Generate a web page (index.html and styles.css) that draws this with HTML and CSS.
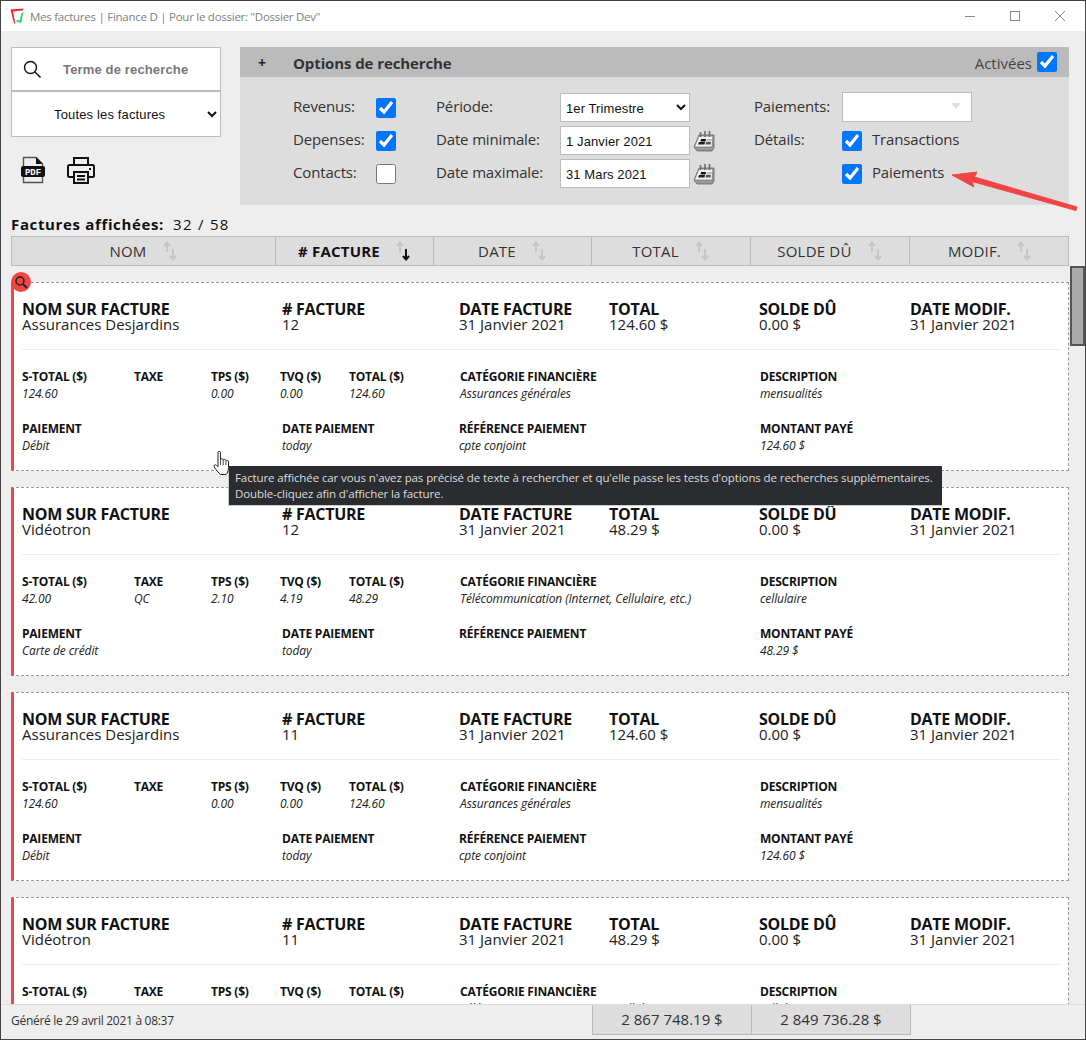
FILE: index.html
```html
<!DOCTYPE html>
<html lang="fr">
<head>
<meta charset="utf-8">
<title>Mes factures</title>
<link rel="stylesheet" href="styles.css">
</head>
<body>
<svg class="defs" width="0" height="0">
  <symbol id="sort" viewBox="0 0 16 20"><path d="M5 11V2M2 5L5 1.500L8 5" fill="none" stroke="#c6c6c6" stroke-width="2"/><path d="M11 8V18M8 15L11 18.500L14 15" fill="none" stroke="#c6c6c6" stroke-width="2"/></symbol>
  <symbol id="sort-down" viewBox="0 0 16 20"><path d="M5 11V2M2 5L5 1.500L8 5" fill="none" stroke="#c6c6c6" stroke-width="2"/><path d="M11 8V18M8 15L11 18.500L14 15" fill="none" stroke="#111" stroke-width="2"/></symbol>
  <symbol id="cal" viewBox="0 0 22 22"><path d="M6 5H21V18L19 21H4L1 17Z" fill="#999" stroke="#666" stroke-width=".8"/><path d="M6 6H20L19 17H1.500Z" fill="#f2f2f2" stroke="#777" stroke-width=".7"/><path d="M8 9H13L12.500 11.500H7.500Z" fill="#111"/><path d="M6 12H12L11.500 14.500H5Z" fill="#222"/><path d="M13 12H18L17.500 14.500H12.500Z" fill="#555"/><path d="M14 9H19L18.500 11.500H13.500Z" fill="#bbb"/><path d="M7.500 2V7M12 1V7M16.500 1V7" stroke="#777" stroke-width="1.800"/></symbol>
</svg>
<div class="window">
  <header class="titlebar">
    <svg class="logo" width="15" height="16" viewBox="0 0 15 16"><path d="M.5 1.500L13.500 .5L12.300 2.600L3 3.400L5.200 14.500L4 15.500Z" fill="#f5222d"/><path d="M13.500 3.500L11.200 15L6 13.500L7 11.800L9.700 12.500L11.300 5.500Z" fill="#23d57c"/></svg>
    <span class="title-text">Mes factures | Finance D | Pour le dossier: "Dossier Dev"</span>
    <div class="win-controls">
      <svg width="12" height="12" viewBox="0 0 12 12"><path d="M1 6.500H11" stroke="#888" fill="none"/></svg>
      <svg width="12" height="12" viewBox="0 0 12 12"><rect x="1.500" y="1.500" width="9" height="9" stroke="#888" fill="none"/></svg>
      <svg width="12" height="12" viewBox="0 0 12 12"><path d="M1 1L11 11M11 1L1 11" stroke="#888" fill="none"/></svg>
    </div>
  </header>

  <section class="top">
    <div class="left-col">
      <div class="search-box">
        <svg width="20" height="20" viewBox="0 0 20 20"><circle cx="8.500" cy="8.500" r="6" stroke="#111" stroke-width="1.400" fill="none"/><path d="M13 13L18.500 18.500" stroke="#111" stroke-width="1.600"/></svg>
        <span class="search-text">Terme de recherche</span>
      </div>
      <select class="filter-select"><option>Toutes les factures</option></select>
      <div class="tools">
        <svg width="26" height="28" viewBox="0 0 26 28"><path d="M3.500 11V1.500H16L22.500 8V11M3.500 21V26.500H22.500V21" fill="none" stroke="#555" stroke-width="1.400"/><path d="M16 1L23 8H16Z" fill="#111"/><rect x="1" y="10" width="24" height="11" rx="2" fill="#111"/><text x="13" y="19" class="pdf-label" text-anchor="middle">PDF</text></svg>
        <svg width="28" height="28" viewBox="0 0 28 28"><path d="M7 9V2H21V9" fill="none" stroke="#111" stroke-width="2"/><path d="M7 21H2.500A1.500 1.500 0 0 1 1 19.500V10.500A1.500 1.500 0 0 1 2.500 9H25.500A1.500 1.500 0 0 1 27 10.500V19.500A1.500 1.500 0 0 1 25.500 21H21" fill="none" stroke="#111" stroke-width="2"/><rect x="7" y="16" width="14" height="11" fill="#eee" stroke="#111" stroke-width="2"/><path d="M10 20H18M10 23.500H18" stroke="#111" stroke-width="2"/><rect x="22" y="12" width="2" height="2" fill="#111"/></svg>
      </div>
    </div>

    <div class="options">
      <div class="options-head">
        <span class="plus">+</span>
        <span class="options-title">Options de recherche</span>
        <label class="enabled"><span>Activées</span> <input type="checkbox" class="check" checked></label>
      </div>
      <div class="options-grid">
        <span>Revenus:</span><input type="checkbox" class="check" checked>
        <span>Période:</span><select class="field"><option>1er Trimestre</option></select><i></i>
        <span>Paiements:</span><div class="multi"><i class="multi-arrow"></i></div>

        <span>Depenses:</span><input type="checkbox" class="check" checked>
        <span>Date minimale:</span><div class="field date">1 Janvier 2021</div><svg class="cal"><use href="#cal"/></svg>
        <span>Détails:</span><label class="opt"><input type="checkbox" class="check" checked><span>Transactions</span></label>

        <span>Contacts:</span><input type="checkbox" class="check">
        <span>Date maximale:</span><div class="field date">31 Mars 2021</div><svg class="cal"><use href="#cal"/></svg>
        <i></i><label class="opt"><input type="checkbox" class="check" checked><span>Paiements</span></label>
      </div>
    </div>
  </section>

  <div class="count"><b>Factures affichées:</b><span>32 / 58</span></div>

  <div class="thead">
    <div class="th">NOM <svg class="sort"><use href="#sort"/></svg></div>
    <div class="th active"># FACTURE <svg class="sort"><use href="#sort-down"/></svg></div>
    <div class="th">DATE <svg class="sort"><use href="#sort"/></svg></div>
    <div class="th">TOTAL <svg class="sort"><use href="#sort"/></svg></div>
    <div class="th">SOLDE DÛ <svg class="sort"><use href="#sort"/></svg></div>
    <div class="th">MODIF. <svg class="sort"><use href="#sort"/></svg></div>
  </div>

  <main class="list">
    <article class="card">
      <span class="badge"><svg width="14" height="14" viewBox="0 0 14 14"><circle cx="6" cy="6" r="4" fill="none" stroke="#222" stroke-width="1.500"/><path d="M9 9L13 13" stroke="#222" stroke-width="1.800"/></svg></span>
      <div class="row r1">
        <div><h3>NOM SUR FACTURE</h3><p>Assurances Desjardins</p></div>
        <div><h3># FACTURE</h3><p>12</p></div>
        <div><h3>DATE FACTURE</h3><p>31 Janvier 2021</p></div>
        <div><h3>TOTAL</h3><p>124.60 $</p></div>
        <div><h3>SOLDE DÛ</h3><p>0.00 $</p></div>
        <div><h3>DATE MODIF.</h3><p>31 Janvier 2021</p></div>
      </div>
      <hr>
      <div class="row r2">
        <div><h4>S-TOTAL ($)</h4><em>124.60</em></div>
        <div><h4>TAXE</h4></div>
        <div><h4>TPS ($)</h4><em>0.00</em></div>
        <div><h4>TVQ ($)</h4><em>0.00</em></div>
        <div><h4>TOTAL ($)</h4><em>124.60</em></div>
        <div><h4>CATÉGORIE FINANCIÈRE</h4><em>Assurances générales</em></div>
        <div><h4>DESCRIPTION</h4><em>mensualités</em></div>
      </div>
      <div class="row r3">
        <div><h4>PAIEMENT</h4><em>Débit</em></div>
        <div><h4>DATE PAIEMENT</h4><em>today</em></div>
        <div><h4>RÉFÉRENCE PAIEMENT</h4><em>cpte conjoint</em></div>
        <div><h4>MONTANT PAYÉ</h4><em>124.60 $</em></div>
      </div>
    </article>

    <article class="card">
      <div class="row r1">
        <div><h3>NOM SUR FACTURE</h3><p>Vidéotron</p></div>
        <div><h3># FACTURE</h3><p>12</p></div>
        <div><h3>DATE FACTURE</h3><p>31 Janvier 2021</p></div>
        <div><h3>TOTAL</h3><p>48.29 $</p></div>
        <div><h3>SOLDE DÛ</h3><p>0.00 $</p></div>
        <div><h3>DATE MODIF.</h3><p>31 Janvier 2021</p></div>
      </div>
      <hr>
      <div class="row r2">
        <div><h4>S-TOTAL ($)</h4><em>42.00</em></div>
        <div><h4>TAXE</h4><em>QC</em></div>
        <div><h4>TPS ($)</h4><em>2.10</em></div>
        <div><h4>TVQ ($)</h4><em>4.19</em></div>
        <div><h4>TOTAL ($)</h4><em>48.29</em></div>
        <div><h4>CATÉGORIE FINANCIÈRE</h4><em>Télécommunication (Internet, Cellulaire, etc.)</em></div>
        <div><h4>DESCRIPTION</h4><em>cellulaire</em></div>
      </div>
      <div class="row r3">
        <div><h4>PAIEMENT</h4><em>Carte de crédit</em></div>
        <div><h4>DATE PAIEMENT</h4><em>today</em></div>
        <div><h4>RÉFÉRENCE PAIEMENT</h4></div>
        <div><h4>MONTANT PAYÉ</h4><em>48.29 $</em></div>
      </div>
    </article>

    <article class="card">
      <div class="row r1">
        <div><h3>NOM SUR FACTURE</h3><p>Assurances Desjardins</p></div>
        <div><h3># FACTURE</h3><p>11</p></div>
        <div><h3>DATE FACTURE</h3><p>31 Janvier 2021</p></div>
        <div><h3>TOTAL</h3><p>124.60 $</p></div>
        <div><h3>SOLDE DÛ</h3><p>0.00 $</p></div>
        <div><h3>DATE MODIF.</h3><p>31 Janvier 2021</p></div>
      </div>
      <hr>
      <div class="row r2">
        <div><h4>S-TOTAL ($)</h4><em>124.60</em></div>
        <div><h4>TAXE</h4></div>
        <div><h4>TPS ($)</h4><em>0.00</em></div>
        <div><h4>TVQ ($)</h4><em>0.00</em></div>
        <div><h4>TOTAL ($)</h4><em>124.60</em></div>
        <div><h4>CATÉGORIE FINANCIÈRE</h4><em>Assurances générales</em></div>
        <div><h4>DESCRIPTION</h4><em>mensualités</em></div>
      </div>
      <div class="row r3">
        <div><h4>PAIEMENT</h4><em>Débit</em></div>
        <div><h4>DATE PAIEMENT</h4><em>today</em></div>
        <div><h4>RÉFÉRENCE PAIEMENT</h4><em>cpte conjoint</em></div>
        <div><h4>MONTANT PAYÉ</h4><em>124.60 $</em></div>
      </div>
    </article>

    <article class="card">
      <div class="row r1">
        <div><h3>NOM SUR FACTURE</h3><p>Vidéotron</p></div>
        <div><h3># FACTURE</h3><p>11</p></div>
        <div><h3>DATE FACTURE</h3><p>31 Janvier 2021</p></div>
        <div><h3>TOTAL</h3><p>48.29 $</p></div>
        <div><h3>SOLDE DÛ</h3><p>0.00 $</p></div>
        <div><h3>DATE MODIF.</h3><p>31 Janvier 2021</p></div>
      </div>
      <hr>
      <div class="row r2">
        <div><h4>S-TOTAL ($)</h4><em>42.00</em></div>
        <div><h4>TAXE</h4><em>QC</em></div>
        <div><h4>TPS ($)</h4><em>2.10</em></div>
        <div><h4>TVQ ($)</h4><em>4.19</em></div>
        <div><h4>TOTAL ($)</h4><em>48.29</em></div>
        <div><h4>CATÉGORIE FINANCIÈRE</h4><em>Télécommunication (Internet, Cellulaire, etc.)</em></div>
        <div><h4>DESCRIPTION</h4><em>cellulaire</em></div>
      </div>
    </article>

    <div class="scrollbar"><div class="thumb"></div></div>
  </main>

  <footer class="footer">
    <span class="generated">Généré le 29 avril 2021 à 08:37</span>
    <div class="totals"><div>2 867 748.19 $</div><div>2 849 736.28 $</div></div>
  </footer>

  <div class="tooltip">Facture affichée car vous n'avez pas précisé de texte à rechercher et qu'elle passe les tests d'options de recherches supplémentaires.<br>Double-cliquez afin d'afficher la facture.</div>

  <svg class="hand" width="17" height="26" viewBox="0 0 17 26"><path d="M5 2.500C5 1 7.500 1 7.500 2.500V9.500C8 8.500 10 8.500 10.200 9.800C10.800 9 12.800 9.300 12.900 10.600C13.600 10 15.500 10.300 15.500 12V17.500C15.500 21 14 23.500 13 24.500H7.500C5.500 23 3 19.500 1.200 17C.3 15.500 2 14 3.500 15.300L5 16.800Z" fill="#fff" stroke="#222" stroke-width="1"/><path d="M7.500 10V15M10.200 10V15M12.900 11V15" stroke="#222" stroke-width=".8" fill="none"/></svg>

  <svg class="arrow" width="130" height="44" viewBox="0 0 130 44"><path d="M126 40.500L22 11.500L24 17L2 5L27 2L24.500 7L127 37Z" fill="#f24444" stroke="#f24444" stroke-width="1" stroke-linejoin="round"/></svg>
</div>
</body>
</html>
```

FILE: styles.css
```css
* { box-sizing: border-box; }
html, body { margin: 0; height: 100%; overflow: hidden; }
body { font-family: "Open Sans", "Noto Sans", sans-serif; color: #222; }
.defs { position: absolute; }

.window {
  position: relative;
  width: 1086px;
  height: 1040px;
  border: 1px solid #444;
  background: #eee;
  display: flex;
  flex-direction: column;
  overflow: hidden;
}

.titlebar {
  height: 30px;
  flex: none;
  background: #fff;
  display: flex;
  align-items: center;
  padding-left: 9px;
}
.logo { margin-right: 5px; }
.title-text { font-size: 11.500px; color: #808080; letter-spacing: -0.26px; }
.win-controls { margin-left: auto; display: flex; gap: 33px; padding-right: 19px; }

.top { display: flex; padding: 16px 16px 0 10px; height: 174px; flex: none; }
.left-col { width: 210px; margin-right: 19px; }
.search-box {
  height: 45px;
  background: #fff;
  border: 1px solid #bbb;
  border-bottom-width: 2px;
  display: flex;
  align-items: center;
  padding: 0 0 0 10px;
}
.search-text { margin-left: 21px; font: bold 13px "Liberation Sans", sans-serif; letter-spacing: .15px; color: #777; }
.filter-select {
  display: block;
  width: 210px;
  height: 45px;
  background: #fff;
  border: 1px solid #bbb;
  border-top: 0;
  border-radius: 0;
  padding-left: 38px;
  font: 13px "Liberation Sans", sans-serif;
  letter-spacing: .15px;
  color: #111;
  outline: none;
}
.tools { display: flex; gap: 21px; padding: 19px 0 0 9px; align-items: center; }
.pdf-label { font: bold 9px "Liberation Mono", monospace; fill: #fff; }

.options { flex: 1; height: 158px; background: #ddd; }
.options-head {
  height: 30px;
  background: #bbb;
  display: flex;
  align-items: center;
  padding: 0 12px 0 18px;
}
.plus { width: 35px; font-weight: 700; font-size: 14px; color: #222; }
.options-title { font-weight: 700; font-size: 15px; color: #333; letter-spacing: -.1px; padding-top: 1px; }
.enabled { margin-left: auto; display: flex; align-items: center; gap: 5px; font-size: 15px; color: #444; }
.enabled span { padding-top: 1px; }

.check { width: 20px; height: 20px; margin: 0; accent-color: #0075ff; }
.options-grid {
  display: grid;
  grid-template-columns: 83px 60px 124px 130px 64px 88px 1fr;
  grid-auto-rows: 29px;
  row-gap: 4px;
  padding: 16px 0 0 53px;
  align-items: center;
  font-size: 15px;
  color: #333;
  letter-spacing: -.15px;
}
.options-grid span { padding-bottom: 4px; }
.field {
  height: 29px;
  width: 130px;
  background: #fff;
  border: 1px solid #bbb;
  border-radius: 0;
  padding: 2px 0 0 1px;
  font: 13px "Liberation Sans", sans-serif;
  color: #111;
  outline: none;
  letter-spacing: .1px;
}
.date { display: flex; align-items: center; padding-left: 5px; }
.cal { width: 22px; height: 22px; margin-left: 3px; }
.multi {
  height: 30px;
  width: 130px;
  background: #fff;
  border: 1px solid #bbb;
  margin-top: -2px;
  position: relative;
}
.multi-arrow {
  position: absolute;
  right: 10px;
  top: 10px;
  border-left: 5px solid transparent;
  border-right: 5px solid transparent;
  border-top: 6px solid #ddd;
}
.opt { display: flex; align-items: center; gap: 10px; }

.count { height: 31px; flex: none; padding: 0 0 2px 10px; display: flex; align-items: flex-end; gap: 9px; font-size: 15px; letter-spacing: 1.300px; color: #111; white-space: nowrap; line-height: 20px; }
.count b { font-weight: 700; letter-spacing: .65px; }

.thead {
  flex: none;
  margin: 0 16px 0 10px;
  height: 30px;
  display: grid;
  grid-template-columns: 264px 158px 158px 159px 159px 160px;
  background: #ddd;
  border: 1px solid #bbb;
}
.th {
  display: flex;
  align-items: center;
  justify-content: center;
  gap: 11px;
  font-size: 15px;
  letter-spacing: .2px;
  color: #333;
  border-right: 1px solid #bbb;
  white-space: pre;
}
.th:last-child { border-right: 0; }
.th.active { font-weight: 700; color: #111; }
.sort { width: 16px; height: 20px; flex: none; margin-top: -1px; }

.list {
  flex: none;
  position: relative;
  height: 739px;
  padding: 16px 16px 0 10px;
  overflow: hidden;
  border-bottom: 1px solid #ddd;
}
.card {
  position: relative;
  height: 189px;
  margin-bottom: 16px;
  background: #fff;
  border: 1px dashed #999;
  border-left: 3px solid #f44545;
  padding: 18px 8px 0 8px;
}
.badge {
  position: absolute;
  left: -3px;
  top: -11px;
  width: 20px;
  height: 20px;
  border-radius: 50%;
  background: #f44545;
  display: flex;
  align-items: center;
  justify-content: center;
}
.row { display: grid; }
.r1 { grid-template-columns: 260px 177px 150px 150px 151px 1fr; height: 33px; }
.r2 { grid-template-columns: 112px 77px 69px 69px 111px 300px 1fr; margin-top: 19px; }
.r3 { grid-template-columns: 260px 177px 301px 1fr; margin-top: 19px; }
h3 { margin: 0; font-size: 16px; line-height: 16px; font-weight: 700; color: #111; letter-spacing: -.27px; white-space: nowrap; }
.card p { margin: 0; font-size: 15px; line-height: 15px; color: #222; letter-spacing: 0; white-space: nowrap; }
h4 { margin: 0; font-size: 12px; line-height: 16px; font-weight: 700; color: #111; letter-spacing: -.22px; white-space: nowrap; }
em { display: block; margin-top: 1px; height: 16px; font-size: 12px; line-height: 16px; font-style: italic; color: #222; letter-spacing: -.1px; white-space: nowrap; }
hr { height: 1px; margin: 15px 0 0 0; border: 0; background: #eee; }

.scrollbar { position: absolute; top: 0; right: 0; width: 16px; height: 100%; background: #eee; }
.thumb { width: 15px; height: 80px; margin-left: 1px; background: #aaa; border: 2px solid #555; }

.footer { flex: 1; display: flex; position: relative; padding-left: 10px; }
.generated { font-size: 12px; letter-spacing: -.29px; line-height: 32px; color: #333; }
.totals {
  position: absolute;
  left: 591px;
  top: 0;
  width: 319px;
  height: 30px;
  display: grid;
  grid-template-columns: 159px 1fr;
  background: #ddd;
  border: 1px solid #bbb;
  border-top: 0;
  font-size: 15px;
  color: #333;
  text-align: center;
  line-height: 29px;
}
.totals div:first-child { border-right: 1px solid #bbb; }

.tooltip {
  position: absolute;
  left: 227px;
  top: 465px;
  width: 714px;
  height: 40px;
  background: #2a2c30;
  border: 1px solid #ccc;
  border-width: 0 0 1px 1px;
  color: #ddd;
  padding: 4px 0 0 6px;
  font-size: 11.500px;
  line-height: 16px;
  letter-spacing: -.1px;
  white-space: nowrap;
}
.hand { position: absolute; left: 212px; top: 449px; }
.arrow { position: absolute; left: 949px; top: 169px; }
```
